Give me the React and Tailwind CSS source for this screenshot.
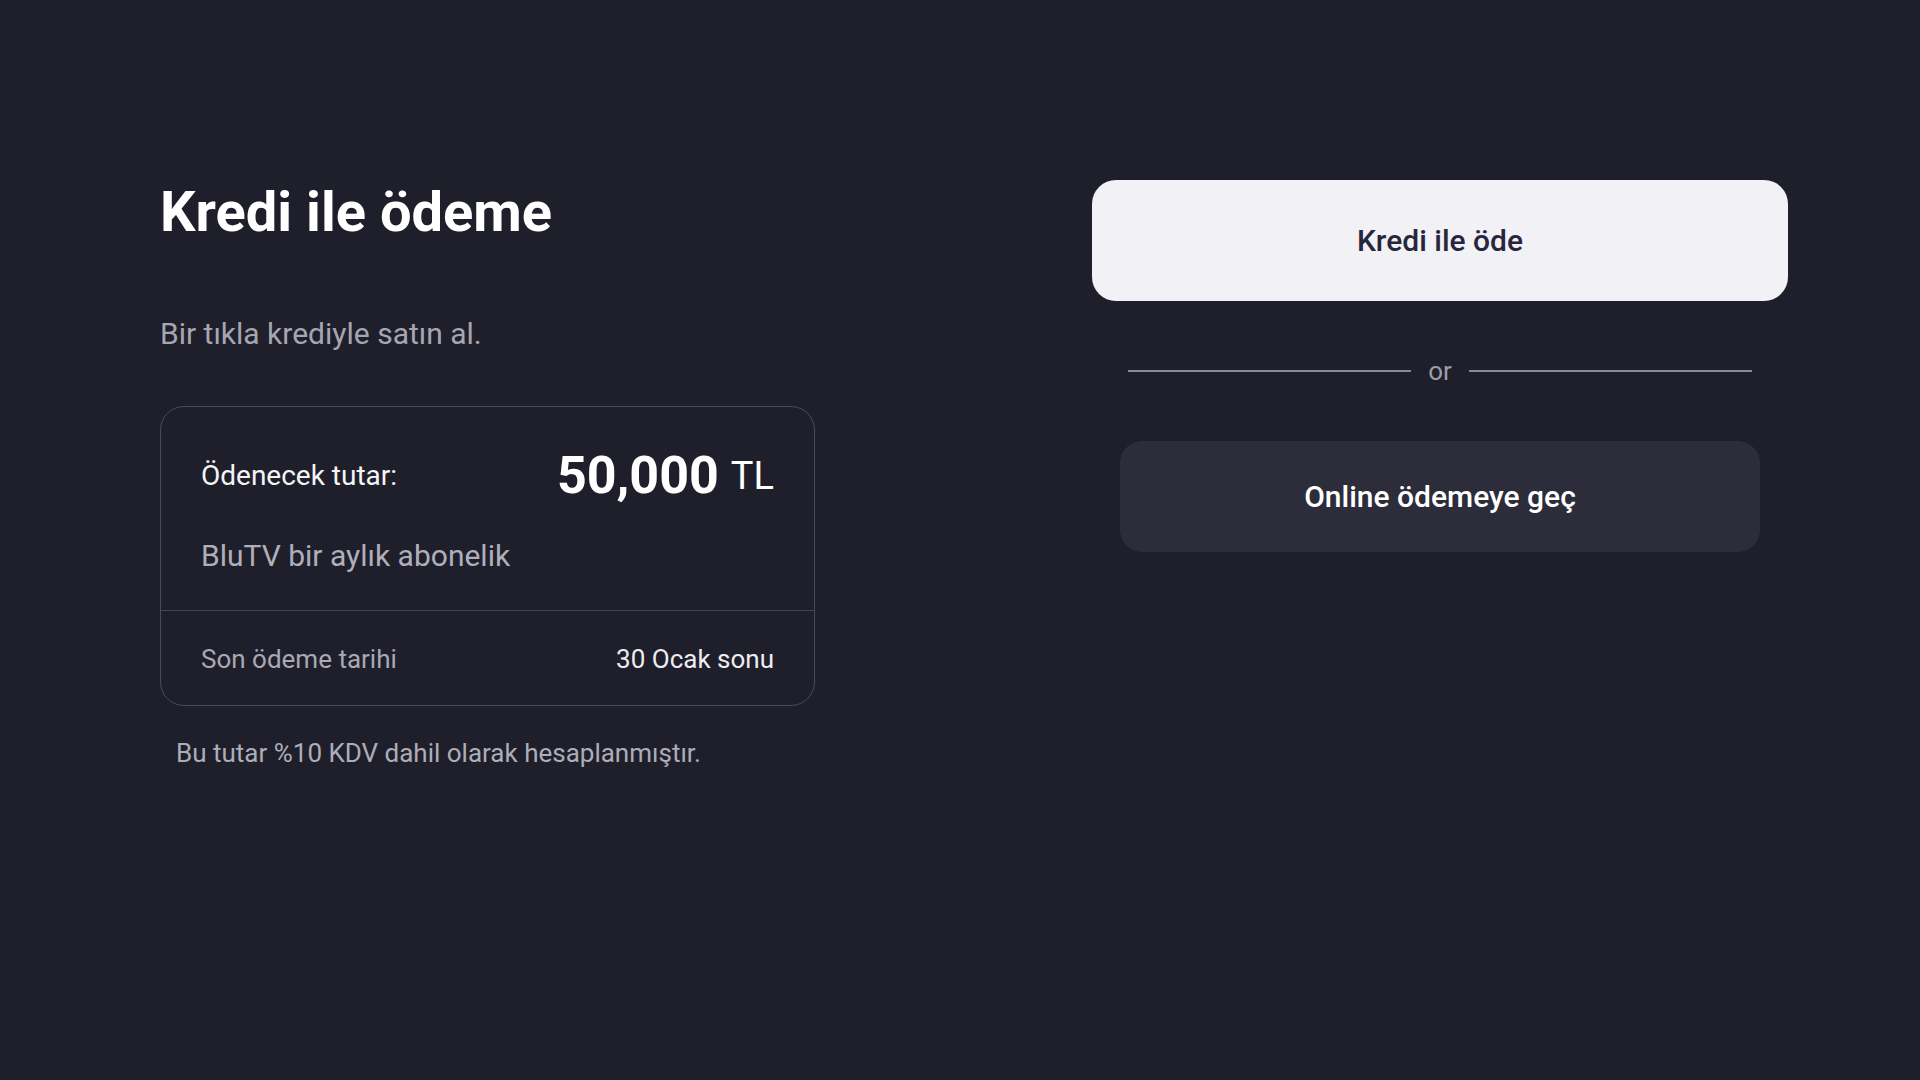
import React from "react";

const font = { fontFamily: "Roboto, 'Noto Sans', Arial, sans-serif" };

const CreditPayment = () => {
  const amount = "50,000";

  return (
    <div
      className="min-h-screen w-full bg-[#1f1f2b] flex items-start pt-[180px] pl-[160px]"
      style={font}
    >
      {/* left column */}
      <div className="w-[655px] flex flex-col">
        <h1 className="text-[56px] leading-[64px] font-bold text-white">
          Kredi ile ödeme
        </h1>
        <p className="mt-[72px] text-[30px] leading-[36px] text-[#a6a6b2]">
          Bir tıkla krediyle satın al.
        </p>

        <div className="mt-[54px] rounded-[24px] border border-[#4a4a58]">
          <div className="px-[40px] pt-[43px] pb-[36px]">
            <div className="flex items-center justify-between">
              <span className="text-[28px] leading-none text-[#f4f4f7]">
                Ödenecek tutar:
              </span>
              <span className="flex items-center gap-[12px]">
                <span className="text-[52px] leading-none font-bold text-white">
                  {amount}
                </span>
                <span className="text-[38px] leading-none text-white">TL</span>
              </span>
            </div>
            <p className="mt-[36px] text-[30px] leading-[36px] text-[#afafba]">
              BluTV bir aylık abonelik
            </p>
          </div>
          <div className="border-t border-[#444452] px-[40px] pt-[36px] pb-[34px] flex items-center justify-between text-[26px] leading-[24px]">
            <span className="text-[#a9a9b4]">Son ödeme tarihi</span>
            <span className="text-[#ededf1]">30 Ocak sonu</span>
          </div>
        </div>

        <p className="mt-[31px] ml-[16px] text-[26px] leading-[32px] text-[#adadb8]">
          Bu tutar %10 KDV dahil olarak hesaplanmıştır.
        </p>
      </div>

      {/* right column */}
      <div className="ml-[277px] w-[696px] flex flex-col">
        <button
          type="button"
          className="h-[121px] w-full rounded-[24px] bg-[#f1f1f6] text-[30px] font-medium text-[#27263d]"
        >
          Kredi ile öde
        </button>

        <div className="mt-[50px] h-[40px] px-[36px] flex items-center gap-[17px]">
          <div className="flex-1 h-[2px] bg-[#8a8a95]" />
          <span className="text-[26px] leading-none text-[#9d9da8]">or</span>
          <div className="flex-1 h-[2px] bg-[#8a8a95]" />
        </div>

        <button
          type="button"
          className="mt-[50px] mx-auto h-[111px] w-[640px] rounded-[22px] bg-[#2c2c3a] text-[30px] font-medium text-white"
        >
          Online ödemeye geç
        </button>
      </div>
    </div>
  );
};

export default function App() {
  return <CreditPayment />;
}
